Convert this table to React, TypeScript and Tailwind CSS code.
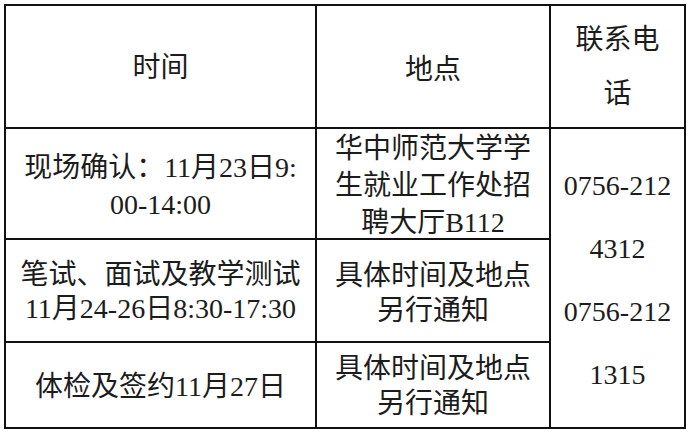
const ROW1_TIME = ["现场确认：11月23日9:", "00-14:00"]
const ROW1_PLACE = ["华中师范大学学", "生就业工作处招", "聘大厅B112"]
const PHONES = ["0756-212", "4312", "0756-212", "1315"]
const NOTICE = ["具体时间及地点", "另行通知"]

function Lines({ lines }: { lines: string[] }) {
  return (
    <>
      {lines.map((l, i) => (
        <span key={i} className="block whitespace-nowrap">
          {l}
        </span>
      ))}
    </>
  )
}

const cell = "bg-white flex flex-col items-center justify-center text-center"

export default function App() {
  return (
    <div className="w-[692px] h-[436px] bg-white pl-[4px] pt-[4px]">
      <div className="grid w-fit grid-cols-[309px_232px_133px] grid-rows-[121px_109px_101px_84px] gap-[2px] p-[2px] bg-[#111] text-[28px] text-[#1c1c1c] font-[family-name:Liberation_Serif,Noto_Sans_CJK_SC,serif]">
        {/* header */}
        <div className={`${cell} leading-[36px] pt-[2px]`}>时间</div>
        <div className={`${cell} leading-[36px] pt-[6px]`}>地点</div>
        <div className={`${cell} leading-[54px]`}>
          <Lines lines={["联系电", "话"]} />
        </div>

        {/* 现场确认 */}
        <div className={`${cell} leading-[37px] pt-[4px]`}>
          <Lines lines={ROW1_TIME} />
        </div>
        <div className={`${cell} leading-[37px] pt-[3px]`}>
          <Lines lines={ROW1_PLACE} />
        </div>
        <div className={`${cell} row-span-3 leading-[63px] pt-[4px]`}>
          <Lines lines={PHONES} />
        </div>

        {/* 笔试 */}
        <div className={`${cell} leading-[34px] pt-[2px]`}>
          <Lines lines={["笔试、面试及教学测试", "11月24-26日8:30-17:30"]} />
        </div>
        <div className={`${cell} leading-[35px] pt-[4px]`}>
          <Lines lines={NOTICE} />
        </div>

        {/* 体检 */}
        <div className={`${cell} leading-[36px] pt-[4px]`}>体检及签约11月27日</div>
        <div className={`${cell} leading-[35px] pt-[2px]`}>
          <Lines lines={NOTICE} />
        </div>
      </div>
    </div>
  )
}
